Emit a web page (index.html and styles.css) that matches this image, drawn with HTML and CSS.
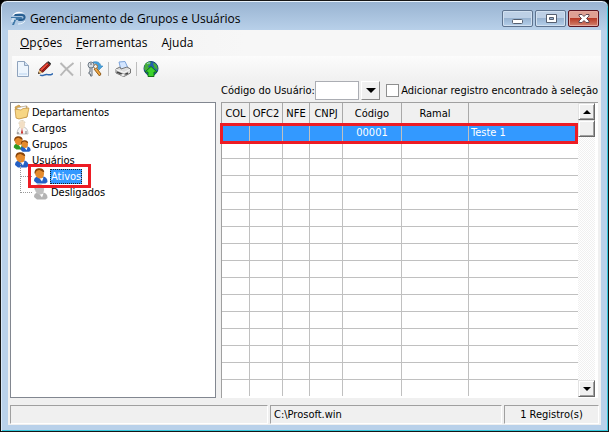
FILE: index.html
```html
<!DOCTYPE html>
<html lang="pt-BR">
<head>
    <meta charset="UTF-8">
    <meta name="viewport" content="width=device-width, initial-scale=1.0">
    <title>Gerenciamento de Grupos e Usuários</title>
    <link rel="stylesheet" href="styles.css">
</head>
<body>

    <!-- Símbolos usados na árvore -->
    <svg class="symbols" aria-hidden="true">
        <symbol id="person" viewBox="0 0 16 16">
            <path class="suit" d="M2 13c0-3 1.500-4 4-4.500h5c3 .5 4.500 2 4.500 5.500l-2 1.500H5z"/>
            <path d="M7 9.500l3 4 1.500-4z" fill="#fff"/>
            <path class="skin" d="M3 5C3 2 4.500 1 7.500 1S12 2.500 12 5.500 10.500 10.500 8 10.500 3 8 3 5z"/>
            <path class="hair" d="M2.500 5.500C2.500 1.500 4.500.3 7.500.3c3 0 4.500 1.500 4.800 4C10 3.500 9 2.500 7.500 2 5.500 2 4 2.800 3.300 5.500z"/>
        </symbol>
    </svg>

    <div class="window">
        <header class="titlebar">
            <svg class="logo" width="17" height="16" viewBox="0 0 17 16">
                <path d="M2 5c2-4 8-6 13-2-4-2-9-1-13 2z" fill="#fff"/>
                <path d="M1 6h10c2 0 2 3 0 3H6l-2 5H2l3-7H1z" fill="#3f78a8"/>
                <path d="M5 3h7c5 0 5 7-1 7H8l1-2h3c2 0 2-3 0-3H4z" fill="#285f91"/>
                <path d="M2 8h4M1 10h3M8 13c3 0 6-1 7-3" stroke="#e8f4fc" fill="none"/>
            </svg>
            <h1>Gerenciamento de Grupos e Usuários</h1>
            <div class="window-buttons">
                <button class="win-btn" aria-label="Minimizar">
                    <svg width="14" height="12" viewBox="0 0 14 12"><rect x="1.500" y="6.500" width="10" height="4" rx="1" fill="#fff" stroke="#555f70"/></svg>
                </button>
                <button class="win-btn" aria-label="Maximizar">
                    <svg width="14" height="12" viewBox="0 0 14 12"><path d="M2.500 1.500h10v8h-10zM5.500 4.500v2h4v-2z" fill="#fff" fill-rule="evenodd" stroke="#555f70"/></svg>
                </button>
                <button class="win-btn close" aria-label="Fechar">
                    <svg width="14" height="12" viewBox="0 0 14 12"><path d="M2 1.500h3l2 2 2-2h3v1.500L9.500 5.500 12 8v1.500H9l-2-2-2 2H2V8l2.500-2.500L2 3z" fill="#fff" stroke="#5e4550"/></svg>
                </button>
            </div>
        </header>

        <div class="client">
            <nav class="menu">
                <a href="#"><u>O</u>pções</a>
                <a href="#"><u>F</u>erramentas</a>
                <a href="#">Ajuda</a>
            </nav>

            <div class="toolbar">
                <button class="tool" aria-label="Novo">
                    <svg width="16" height="16" viewBox="0 0 16 16"><path d="M2.500.5h7l4 4v11h-11z" fill="#edf5fd" stroke="#8fa3bd"/><path d="M4 12h8v2H4z" fill="#d3e4f6"/><path d="M9.500.5v4h4" fill="#cfe1f4" stroke="#8fa3bd"/></svg>
                </button>
                <button class="tool" aria-label="Editar">
                    <svg width="16" height="16" viewBox="0 0 16 16"><path d="M3 14c3 2 4-1 7-.5 2 .5 3 1 6-1" fill="none" stroke="#2f68b0" stroke-width="1.500"/><path d="M1 13l1.500-5L10 1l3.500 3L6 11.500z" fill="#501410"/><path d="M3 8.500l7-6.500 1.500 1.300-7 6.700z" fill="#f0493a"/><path d="M4.800 10.500l7-6.800 1 .8-7 6.500z" fill="#b51b13"/><path d="M1 13l1.300-4 3.200 2.500z" fill="#f5c77e"/><path d="M1 13l.6-2 1.400 1.200zM10 1l1.500-.8L14 2.500 13.500 4z" fill="#222"/></svg>
                </button>
                <button class="tool" aria-label="Excluir" disabled>
                    <svg width="16" height="16" viewBox="0 0 16 16"><path d="M1.500 2L14 14.500M14.500 2C9 6 5 10 1.500 14.500" fill="none" stroke="#b8b8b8" stroke-width="2"/></svg>
                </button>
                <span class="separator"></span>
                <button class="tool" aria-label="Permissões">
                    <svg width="16" height="16" viewBox="0 0 16 16"><path d="M6 1c4-1 7 0 8 4h2l-4 4-3-4h2C10 3 8 2 6 2z" fill="#45a0dc" stroke="#2b79b2" stroke-width=".5"/><path d="M8 5l6 8-1.500 2L7 8" fill="#f0a842" stroke="#925c1b"/><circle cx="8.500" cy="5.500" r="2" fill="#eee" stroke="#a17035"/><path d="M3 6h2v9H3.500v-2H2v-2h1z" fill="#dde1e5" stroke="#68727c"/><circle cx="4" cy="4" r="3" fill="#d8dde2" stroke="#6c7884"/><path d="M3 3h2" stroke="#59636e"/></svg>
                </button>
                <span class="separator"></span>
                <button class="tool" aria-label="Imprimir">
                    <svg width="16" height="16" viewBox="0 0 16 16"><path d="M4 1l6-.5L13 7 6 9z" fill="#d4e6ff" stroke="#7da4db"/><path d="M1 8l4-2 1 2 6-2 3.500 2v4L9 15.500 1 12z" fill="#ddd" stroke="#777"/><path d="M1 8.500l8 3 6-3" fill="none" stroke="#f8f8f8"/><path d="M2 11l7 3 4-2" fill="none" stroke="#444" stroke-width="1.500"/><path d="M5 14l3-1.500 3 1.500-3 1.500z" fill="#f8f8f8" stroke="#888" stroke-width=".5"/></svg>
                </button>
                <span class="separator"></span>
                <button class="tool" aria-label="Publicar">
                    <svg width="16" height="16" viewBox="0 0 16 16"><circle cx="8" cy="7.500" r="7" fill="#245fae" stroke="#174778"/><path d="M2 3c2-2 4-2.500 6-2L7 4 5 5l1 2-3 3-2-2zM10 2c3 0 5 3 4.500 7l-3-2-1-3z" fill="#44ad38"/><path d="M4 3c1-1 2-1 3-1" stroke="#a5dcfa" fill="none"/><path d="M8 5.500l6 5.500h-3v4.500H5V11H2z" fill="#3bd22c" stroke="#137318"/></svg>
                </button>
            </div>

            <main>
                <form class="search">
                    <label for="codigo">Código do Usuário:</label>
                    <input type="text" id="codigo">
                    <button type="button" class="drop" aria-label="Procurar"><i class="arrow big"></i></button>
                    <input type="checkbox" id="adicionar">
                    <label for="adicionar">Adicionar registro encontrado à seleção</label>
                </form>

                <ul class="tree">
                    <li>
                        <svg width="16" height="16" viewBox="0 0 16 16"><path d="M1 3l4-2 2 2 6-1v11l-9 1.500z" fill="#d8a94f" stroke="#ba883c" stroke-width=".6"/><path d="M3 4l9-2 1 10-9 2z" fill="#fff" stroke="#aaa" stroke-width=".6"/><path d="M1 5l6 1 2-1.500 6-.5-2 9-8 2-3-1z" fill="#f7d684" stroke="#bd8b36" stroke-width=".7"/></svg>
                        <span>Departamentos</span>
                    </li>
                    <li>
                        <svg width="16" height="16" viewBox="0 0 16 16"><path d="M3 14c0-4 2-6 3-7h4c3 1 4 4 4 7z" fill="#f5f5f5" stroke="#aaa" stroke-width=".7"/><path d="M5 5c0-5 6-5 6-1 0 4-2 5-3 5S5 7 5 5z" fill="#f2dfc5"/><path d="M5 4c0-5 6-4 6-1" stroke="#ddd0b8" fill="none"/><path d="M8 8l1 5-1 1-1-1z" fill="#c72823"/><path d="M4 12v2M12 11v3" stroke="#777"/></svg>
                        <span>Cargos</span>
                    </li>
                    <li>
                        <svg width="18" height="16" viewBox="0 0 18 16"><g class="green"><use href="#person" x="-1" y="0" width="14" height="14"/></g><g class="blue"><use href="#person" x="6" y="4" width="12" height="12"/></g></svg>
                        <span>Grupos</span>
                    </li>
                    <li>
                        <svg class="blue" width="16" height="16"><use href="#person" width="16" height="16"/></svg>
                        <span>Usuários</span>
                    </li>
                    <li class="child marked">
                        <svg class="blue" width="16" height="16"><use href="#person" width="16" height="16"/></svg>
                        <span class="selected">Ativos</span>
                    </li>
                    <li class="child">
                        <svg class="gray" width="16" height="16"><use href="#person" width="16" height="16"/></svg>
                        <span>Desligados</span>
                    </li>
                </ul>

                <div class="grid">
                    <table>
                        <colgroup>
                            <col class="c-col"><col class="c-ofc"><col class="c-nfe"><col class="c-cnpj"><col class="c-codigo"><col class="c-ramal"><col>
                        </colgroup>
                        <thead>
                            <tr><th>COL</th><th>OFC2</th><th>NFE</th><th>CNPJ</th><th>Código</th><th>Ramal</th><th></th></tr>
                        </thead>
                        <tbody>
                            <tr class="current"><td></td><td></td><td></td><td></td><td>00001</td><td></td><td class="name">Teste 1</td></tr>
                            <tr><td></td><td></td><td></td><td></td><td></td><td></td><td></td></tr>
                            <tr><td></td><td></td><td></td><td></td><td></td><td></td><td></td></tr>
                            <tr><td></td><td></td><td></td><td></td><td></td><td></td><td></td></tr>
                            <tr><td></td><td></td><td></td><td></td><td></td><td></td><td></td></tr>
                            <tr><td></td><td></td><td></td><td></td><td></td><td></td><td></td></tr>
                            <tr><td></td><td></td><td></td><td></td><td></td><td></td><td></td></tr>
                            <tr><td></td><td></td><td></td><td></td><td></td><td></td><td></td></tr>
                            <tr><td></td><td></td><td></td><td></td><td></td><td></td><td></td></tr>
                            <tr><td></td><td></td><td></td><td></td><td></td><td></td><td></td></tr>
                            <tr><td></td><td></td><td></td><td></td><td></td><td></td><td></td></tr>
                            <tr><td></td><td></td><td></td><td></td><td></td><td></td><td></td></tr>
                            <tr><td></td><td></td><td></td><td></td><td></td><td></td><td></td></tr>
                            <tr><td></td><td></td><td></td><td></td><td></td><td></td><td></td></tr>
                            <tr><td></td><td></td><td></td><td></td><td></td><td></td><td></td></tr>
                            <tr><td></td><td></td><td></td><td></td><td></td><td></td><td></td></tr>
                        </tbody>
                    </table>
                    <div class="scrollbar">
                        <button class="scroll-btn" aria-label="Subir"><i class="arrow up"></i></button>
                        <div class="thumb"></div>
                        <button class="scroll-btn down" aria-label="Descer"><i class="arrow"></i></button>
                    </div>
                </div>
            </main>

            <footer class="status">
                <span></span>
                <span>C:\Prosoft.win</span>
                <span class="count">1 Registro(s)</span>
            </footer>
        </div>
    </div>

</body>
</html>
```
FILE: styles.css
```css
*, *::before, *::after {
    box-sizing: border-box;
}

body {
    margin: 0;
    background: #000;
    font-family: 'DejaVu Sans Condensed', 'DejaVu Sans', sans-serif;
    font-size: 11px;
    color: #000;
}

button, input {
    font: inherit;
    margin: 0;
    padding: 0;
}

.symbols {
    position: absolute;
    width: 0;
    height: 0;
}

/* Janela */
.window {
    min-height: 100vh;
    display: flex;
    flex-direction: column;
    padding: 0 6px 5px;
    border: 1px solid #161616;
    border-radius: 7px 7px 0 0;
    background: linear-gradient(#98b3d1, #b9d1ea 30px, #b9d1ea);
    box-shadow: inset 0 1px #e8f2fb, inset 1px 0 #d8e8f8, inset -1px -1px #35c8dc;
}

.titlebar {
    display: flex;
    align-items: center;
    height: 29px;
    padding: 6px 3px 0 3px;
}

.titlebar h1 {
    flex: 1;
    margin: 0 0 0 3px;
    font: 12px 'Open Sans', sans-serif;
}

.window-buttons {
    display: flex;
    gap: 2px;
}

.win-btn {
    display: flex;
    align-items: center;
    justify-content: center;
    width: 31px;
    height: 17px;
    border: 1px solid #5e738f;
    border-radius: 2px;
    background: linear-gradient(#bdd0e6 45%, #98b3d1 50%, #b5cfea);
    box-shadow: inset 0 0 0 1px #d1e0f0;
}

.win-btn.close {
    border-color: #5a1420;
    background: linear-gradient(#dfa093 45%, #b83a26 50%, #d18370);
    box-shadow: inset 0 0 0 1px #e5aaa0;
}

.client {
    flex: 1;
    display: flex;
    flex-direction: column;
    margin: 0 1px 1px;
    background: #f0f0f0;
}

/* Menu e barra de ferramentas */
.menu {
    display: flex;
    gap: 14px;
    height: 26px;
    padding: 0 12px;
    background: linear-gradient(90deg, #f0f0f0, #f7f7f7 40%);
    font: 12px/26px 'Open Sans', sans-serif;
}

.menu a {
    color: #000;
    text-decoration: none;
}

.toolbar {
    display: flex;
    align-items: center;
    height: 25px;
    margin-left: 4px;
    background: linear-gradient(#fcfcfc, #f0f0f0);
}

.tool {
    display: flex;
    align-items: center;
    justify-content: center;
    width: 22px;
    height: 22px;
    border: 0;
    background: none;
}

.separator {
    width: 1px;
    height: 14px;
    margin: 0 3px 0 2px;
    background: #bdbdbd;
}

/* Conteúdo */
main {
    flex: 1;
    display: grid;
    grid-template-columns: 206px minmax(0, 1fr);
    grid-template-rows: 21px 1fr;
    column-gap: 5px;
    padding: 0 3px 7px 2px;
}

.search {
    grid-column: 2;
    display: flex;
    align-items: center;
    height: 19px;
    white-space: nowrap;
}

.search input[type="text"] {
    flex: none;
    width: 44px;
    height: 19px;
    margin: 0 2px 0 auto;
    border: 1px solid #abadb3;
    background: #fff;
}

.search input[type="checkbox"] {
    flex: none;
    appearance: none;
    width: 13px;
    height: 13px;
    margin: 0 2px 0 6px;
    border: 1px solid #8e8f8f;
    background: #fff;
}

.drop {
    flex: none;
    display: flex;
    align-items: center;
    justify-content: center;
    width: 19px;
    height: 19px;
    border: 1px solid;
    border-color: #fff #8a8a8a #8a8a8a #fff;
    background: #f0f0f0;
}

.arrow {
    border: 4px solid transparent;
    border-top-color: #000;
    border-bottom: 0;
}

.arrow.up {
    border-top: 0;
    border-bottom: 4px solid #000;
}

.arrow.big {
    border-width: 5px 5px 0;
}

/* Árvore */
.tree {
    margin: 0;
    padding: 1px 2px;
    border: 1px solid #828790;
    background: #fff;
    list-style: none;
}

.tree li {
    position: relative;
    display: flex;
    align-items: center;
    height: 16px;
}

.tree li svg {
    flex: none;
    width: 18px;
}

.tree li span {
    padding: 0 1px;
    line-height: 15px;
}

.tree .child {
    padding-left: 19px;
}

.tree .child::before {
    content: "";
    position: absolute;
    left: 7px;
    top: -8px;
    width: 12px;
    height: 17px;
    border-left: 1px dotted #999;
    border-bottom: 1px dotted #999;
}

.tree .marked::after {
    content: "";
    position: absolute;
    left: 15px;
    top: -4px;
    width: 63px;
    height: 24px;
    border: 3px solid #ed1c24;
    z-index: 1;
}

.tree .selected {
    background: #3399ff;
    color: #fff;
    outline: 1px dotted #222;
    outline-offset: -1px;
}

.skin { fill: var(--skin, #e58b2d); }
.hair { fill: var(--hair, #884409); }
.suit { fill: var(--suit, #2460c5); }
.green { --suit: #2c9a24; }
.blue { --suit: #2460c5; }
.gray { --skin: #c0c0c0; --hair: #a8a8a8; --suit: #b4b4b4; }

/* Tabela */
.grid {
    display: flex;
    align-items: stretch;
    padding: 0 3px 1px 0;
    border-left: 1px solid #a0a0a0;
    border-top: 1px solid #a0a0a0;
    background: #fff;
}

table {
    flex: 1;
    align-self: flex-start;
    width: 100%;
    table-layout: fixed;
    border-collapse: separate;
    border-spacing: 0;
}

.c-col { width: 28px; }
.c-ofc { width: 33px; }
.c-nfe { width: 27px; }
.c-cnpj { width: 33px; }
.c-codigo { width: 59px; }
.c-ramal { width: 67px; }

th, td {
    padding: 0;
    border-right: 1px solid #c0c0c0;
    border-bottom: 1px solid #c0c0c0;
    text-align: center;
    font-weight: normal;
    white-space: nowrap;
}

th:last-child, td:last-child {
    border-right: 0;
}

th {
    height: 22px;
    background: #f0f0f0;
    border-color: #a9a9a9;
}

td {
    height: 17px;
    line-height: 16px;
}

tbody tr:last-child td {
    height: 16px;
    border-bottom: 0;
}

.current {
    position: relative;
    background: #3399ff;
    color: #fff;
}

.current .name {
    padding-left: 2px;
    text-align: left;
}

.current .name::after {
    content: "";
    position: absolute;
    inset: -2px 0 -2px -2px;
    border: 3px solid #ed1c24;
}

.scrollbar {
    flex: none;
    display: flex;
    flex-direction: column;
    width: 17px;
    background: repeating-conic-gradient(#f0f0f0 0 25%, #fff 0 50%) 0 0 / 2px 2px;
}

.scroll-btn, .thumb {
    display: flex;
    align-items: center;
    justify-content: center;
    width: 17px;
    height: 17px;
    border: 1px solid;
    border-color: #e3e3e3 #696969 #696969 #e3e3e3;
    background: #f0f0f0;
    box-shadow: inset 1px 1px #fff, inset -1px -1px #a0a0a0;
}

.scroll-btn.down {
    margin-top: auto;
}

/* Barra de status */
.status {
    display: grid;
    grid-template-columns: 258px 1fr 95px;
    gap: 2px;
    padding: 0 2px 1px;
}

.status span {
    height: 19px;
    padding: 0 3px;
    border: 1px solid;
    border-color: #a0a0a0 #fff #fff #a0a0a0;
    line-height: 18px;
}

.status .count {
    text-align: center;
}
```
